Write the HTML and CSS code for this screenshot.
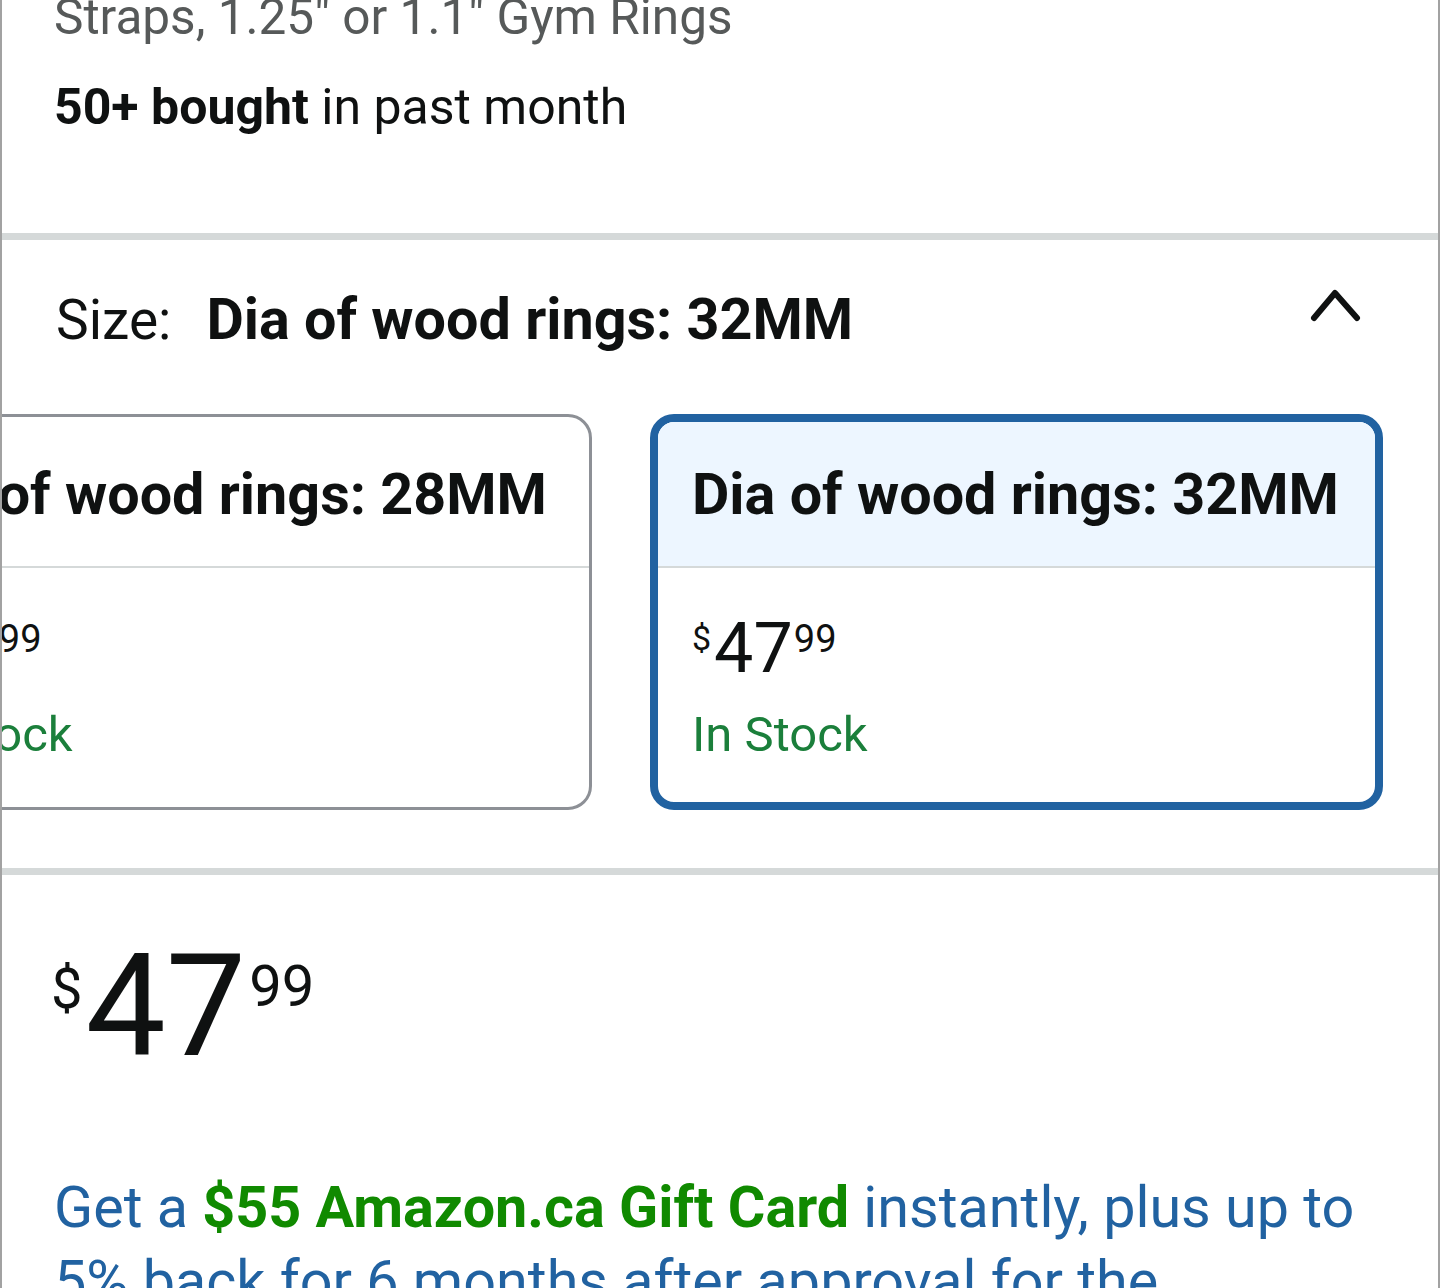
FILE: index.html
```html
<!DOCTYPE html>
<html lang="en">
<head>
<meta charset="utf-8">
<title>Gym Rings</title>
<link rel="stylesheet" href="styles.css">
</head>
<body>
<div class="page">
  <section class="title-sec">
    <p class="title">Straps, 1.25" or 1.1" Gym Rings</p>
    <p class="bought"><b>50+ bought</b> in past month</p>
  </section>
  <div class="sep"></div>
  <section class="size-sec">
    <div class="size-head">
      <div class="size-text"><span class="size-label">Size:</span><span class="size-val">Dia of wood rings: 32MM</span></div>
      <svg class="chev" width="52" height="40" viewBox="0 0 52 40" aria-hidden="true"><polyline points="4,33 25,8 47,33" fill="none" stroke="#0f1111" stroke-width="6" stroke-linecap="round" stroke-linejoin="round"/></svg>
    </div>
    <div class="cards-viewport">
      <div class="cards">
        <div class="card">
          <div class="card-head">Dia of wood rings: 28MM</div>
          <div class="card-body">
            <div class="price-sm"><span class="cur">$</span><span class="whole">47</span><span class="frac">99</span></div>
            <p class="stock">In Stock</p>
          </div>
        </div>
        <div class="card card-sel">
          <div class="card-head">Dia of wood rings: 32MM</div>
          <div class="card-body">
            <div class="price-sm"><span class="cur">$</span><span class="whole">47</span><span class="frac">99</span></div>
            <p class="stock">In Stock</p>
          </div>
        </div>
      </div>
    </div>
  </section>
  <div class="sep"></div>
  <section class="price-sec">
    <div class="price-big"><span class="cur">$</span><span class="whole">47</span><span class="frac">99</span></div>
    <p class="promo">Get a <b>$55 Amazon.ca Gift Card</b> instantly, plus up to 5% back for 6 months after approval for the Amazon.ca Rewards Mastercard</p>
  </section>
</div>
</body>
</html>
```

FILE: styles.css
```css
html, body {
  margin: 0;
  padding: 0;
  background: #ffffff;
}
body {
  font-family: Roboto, "Noto Sans", Arial, sans-serif;
  color: #0f1111;
  overflow: hidden;
}
.page {
  width: 1440px;
  height: 1288px;
  box-sizing: border-box;
  border-left: 2px solid #a2a2a2;
  border-right: 2px solid #a2a2a2;
  overflow: hidden;
}
p { margin: 0; }

.title-sec {
  padding: 0 52px 98px;
  margin-top: -11px;
}
.title {
  font-size: 49.5px;
  line-height: 56px;
  color: #565959;
  margin-bottom: 34px;
  white-space: nowrap;
}
.bought {
  font-size: 50px;
  line-height: 56px;
  color: #0f1111;
}
.bought b { font-weight: 700; }

.sep {
  height: 7px;
  background: #d5d9d9;
}

.size-sec {
  padding: 45px 0 58px;
}
.size-head {
  display: flex;
  align-items: flex-start;
  justify-content: space-between;
  padding: 0 76px 0 54px;
}
.size-text {
  font-size: 57.5px;
  line-height: 70px;
  white-space: nowrap;
}
.size-label {
  margin-right: 35px;
  font-size: 55px;
}
.size-val { font-weight: 700; }

.cards-viewport {
  margin-top: 59px;
  overflow: hidden;
}
.cards {
  display: flex;
  gap: 58px;
  margin-left: -143px;
}
.card {
  flex: 0 0 733px;
  box-sizing: border-box;
  height: 396px;
  border: 3px solid #8d9096;
  border-radius: 24px;
  overflow: hidden;
  display: flex;
  flex-direction: column;
  background: #fff;
}
.card-head {
  height: 144px;
  flex: 0 0 auto;
  display: flex;
  align-items: center;
  padding: 0 30px 0 38px;
  font-size: 57.5px;
  font-weight: 700;
  white-space: nowrap;
  border-bottom: 2px solid #d5d9d9;
  margin-top: 5px;
}
.card-sel {
  border: 8px solid #2162a1;
}
.card-sel .card-head {
  background: #edf6ff;
  margin-top: 0;
  padding-left: 34px;
}
.card-body {
  padding: 45px 36px 0 35px;
}
.card-sel .card-body { padding-left: 34px; }

.price-sm {
  display: flex;
  align-items: flex-start;
}
.price-sm .cur {
  font-size: 34px;
  line-height: 1;
  margin-top: 8px;
  margin-right: 3px;
}
.price-sm .whole {
  font-size: 70px;
  line-height: 1;
}
.price-sm .frac {
  font-size: 38px;
  line-height: 1;
  margin-top: 7px;
  margin-left: 1px;
}
.stock {
  margin-top: 22px;
  font-size: 49px;
  line-height: 60px;
  color: #1b7f3b;
}

.price-sec {
  padding: 60px 52px 0;
}
.price-big {
  display: flex;
  align-items: flex-start;
}
.price-big .cur {
  font-size: 56px;
  line-height: 1;
  margin-top: 26px;
  margin-left: -3px;
  margin-right: 3px;
}
.price-big .whole {
  font-size: 143px;
  line-height: 1;
}
.price-big .frac {
  font-size: 58px;
  line-height: 1;
  margin-top: 22px;
  margin-left: 3px;
}
.promo {
  margin-top: 93px;
  font-size: 57.5px;
  line-height: 74px;
  color: #2162a1;
  max-width: 1330px;
}
.promo b {
  color: #108a00;
  font-weight: 700;
}
```
